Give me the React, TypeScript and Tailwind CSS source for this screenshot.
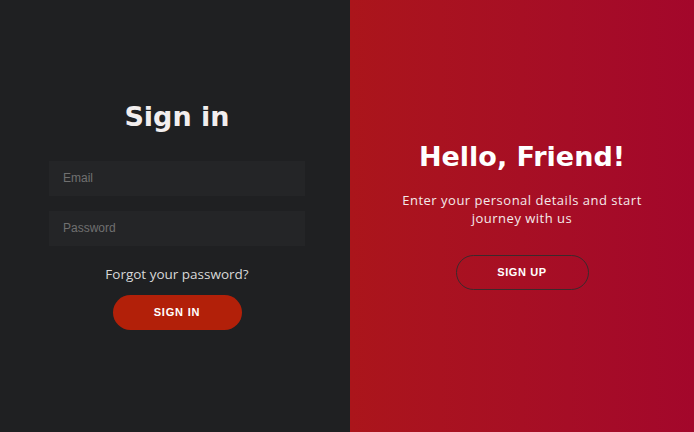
export default function App() {
  return (
    <div className="flex h-[432px] w-[694px] overflow-hidden bg-[#1f2022] font-['Open_Sans',sans-serif]">
      <form className="flex w-[350px] flex-col items-center justify-center bg-[#1f2022] pl-[49px] pr-[45px]">
        <h1 className="mb-[31px] font-['DejaVu_Sans',sans-serif] text-[27px] font-bold leading-none text-[#f2eeee]">
          Sign in
        </h1>
        <input
          className="mb-[15px] h-[35px] w-full bg-[#242527] px-[14px] font-['Liberation_Sans',sans-serif] text-[12px] text-white outline-none placeholder:text-[#707070]"
          placeholder="Email"
          type="email"
        />
        <input
          className="h-[35px] w-full bg-[#242527] px-[14px] font-['Liberation_Sans',sans-serif] text-[12px] text-white outline-none placeholder:text-[#707070]"
          placeholder="Password"
          type="password"
        />
        <a href="#" className="mt-[19px] text-[13.5px] leading-[18px] text-[#d8d8d8]">
          Forgot your password?
        </a>
        <button
          type="submit"
          className="mt-[12px] h-[35px] w-[129px] rounded-full bg-[#b22009] font-['Liberation_Sans',sans-serif] text-[11px] font-bold tracking-[0.8px] text-white"
        >
          SIGN IN
        </button>
      </form>
      <div className="flex flex-1 flex-col items-center justify-center bg-gradient-to-r from-[#ab151b] to-[#a3072b] px-[30px] text-center">
        <h1 className="font-['DejaVu_Sans',sans-serif] text-[27px] font-bold leading-none text-white">
          Hello, Friend!
        </h1>
        <p className="mt-[21px] text-[13px] leading-[18px] tracking-[0.5px] text-[#f4eaea]">
          Enter your personal details and start
          <br />
          journey with us
        </p>
        <button className="mt-[28px] h-[35px] w-[133px] rounded-full border border-[#3b2a2c] font-['Liberation_Sans',sans-serif] text-[11px] font-bold tracking-[0.6px] text-white">
          SIGN UP
        </button>
      </div>
    </div>
  )
}
